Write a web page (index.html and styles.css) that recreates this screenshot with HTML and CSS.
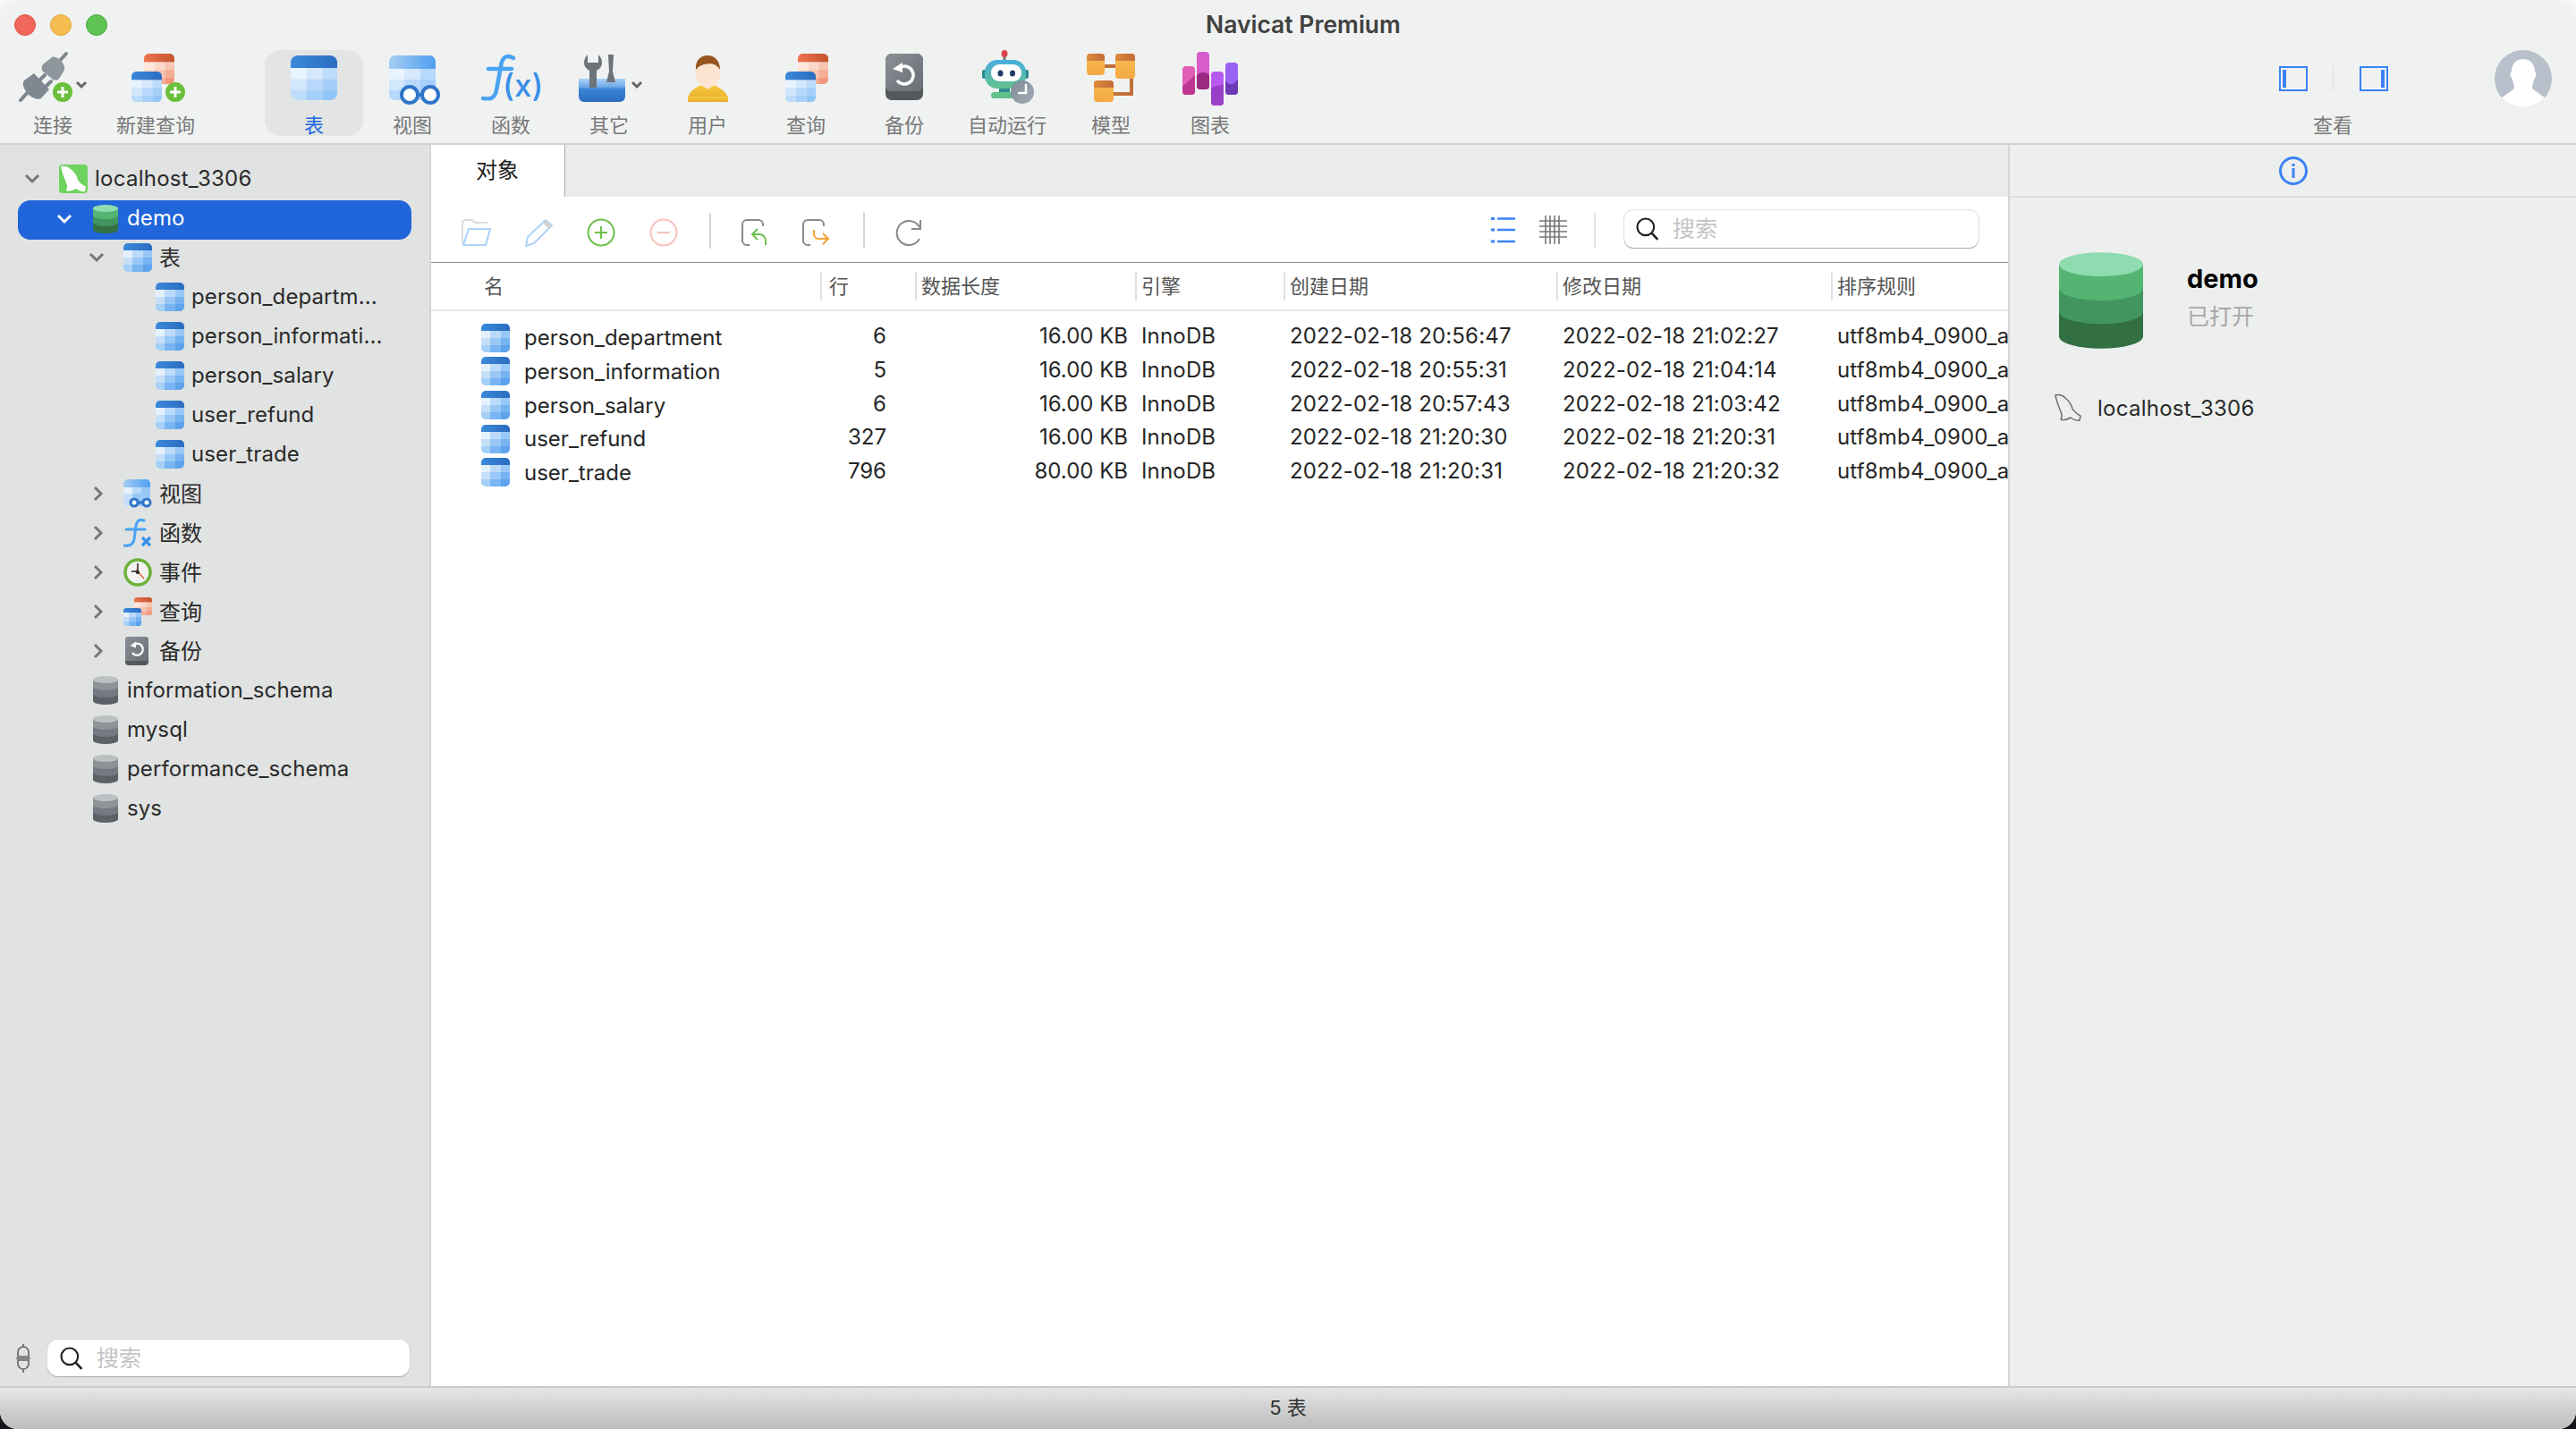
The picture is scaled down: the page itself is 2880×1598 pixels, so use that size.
FILE: index.html
```html
<!DOCTYPE html>
<html lang="zh">
<head>
<meta charset="utf-8">
<title>Navicat Premium</title>
<link rel="stylesheet" href="styles.css">
</head>
<body>
<svg class="defs" aria-hidden="true">
  <defs>
    <clipPath id="rc"><rect width="32" height="32" rx="5"/></clipPath>
    <linearGradient id="gh" x1="0" x2="1" y1="0" y2="0"><stop offset="0" stop-color="#3b89da"/><stop offset="1" stop-color="#2a6cc0"/></linearGradient>
    <linearGradient id="go" x1="0" x2="1" y1="0" y2="0"><stop offset="0" stop-color="#ea744f"/><stop offset="1" stop-color="#c5532c"/></linearGradient>
    <linearGradient id="gv" x1="0" x2="1" y1="0" y2="0"><stop offset="0" stop-color="#a5cdf3"/><stop offset="1" stop-color="#4d9ef0"/></linearGradient>
    <linearGradient id="gb" x1="0" x2="0" y1="0" y2="1"><stop offset="0" stop-color="#a9d3f8"/><stop offset=".35" stop-color="#6fa9e6"/><stop offset=".45" stop-color="#3c83d6"/><stop offset="1" stop-color="#2a6cc0"/></linearGradient>
    <linearGradient id="gu" x1="0" x2="0" y1="0" y2="1"><stop offset="0" stop-color="#f6cb3e"/><stop offset="1" stop-color="#e8a92c"/></linearGradient>
    <linearGradient id="gk" x1="0" x2="1" y1="0" y2="1"><stop offset="0" stop-color="#8b9096"/><stop offset="1" stop-color="#696e75"/></linearGradient>
    <linearGradient id="gr" x1="0" x2="0" y1="0" y2="1"><stop offset="0" stop-color="#48aede"/><stop offset="1" stop-color="#62c08c"/></linearGradient>
    <linearGradient id="gc" x1="0" x2="1" y1="0" y2="1"><stop offset="0" stop-color="#7d8a96"/><stop offset="1" stop-color="#a3adb5"/></linearGradient>
    <linearGradient id="gm" x1="0" x2="0" y1="0" y2="1"><stop offset="0" stop-color="#f8bb52"/><stop offset="1" stop-color="#f4a843"/></linearGradient>
    <linearGradient id="gmh" x1="0" x2="1" y1="0" y2="0"><stop offset="0" stop-color="#e08a3c"/><stop offset="1" stop-color="#bf6a38"/></linearGradient>
    <symbol id="tbl" viewBox="0 0 32 32" preserveAspectRatio="none">
      <g clip-path="url(#rc)">
        <rect width="32" height="8" fill="url(#gh)"/>
        <rect y="8" width="10" height="8" fill="#e4f1fd"/><rect x="10" y="8" width="12" height="8" fill="#bcdafa"/><rect x="22" y="8" width="10" height="8" fill="#97c8f7"/>
        <rect y="16" width="10" height="8" fill="#c5dff9"/><rect x="10" y="16" width="12" height="8" fill="#99c8f7"/><rect x="22" y="16" width="10" height="8" fill="#75b3f1"/>
        <rect y="24" width="10" height="8" fill="#a5d0f8"/><rect x="10" y="24" width="12" height="8" fill="#78b5f2"/><rect x="22" y="24" width="10" height="8" fill="#5ea3eb"/>
      </g>
    </symbol>
    <symbol id="tbl-lt" viewBox="0 0 32 32" preserveAspectRatio="none">
      <g clip-path="url(#rc)">
        <rect width="32" height="9" fill="url(#gh)"/>
        <rect y="9" width="11" height="8" fill="#e7f3fe"/><rect x="11" y="9" width="11" height="8" fill="#d5e8fd"/><rect x="22" y="9" width="10" height="8" fill="#bcdcfb"/>
        <rect y="17" width="11" height="8" fill="#d2e6fc"/><rect x="11" y="17" width="11" height="8" fill="#b8d9fb"/><rect x="22" y="17" width="10" height="8" fill="#a5cffa"/>
        <rect y="25" width="11" height="7" fill="#bcdcfb"/><rect x="11" y="25" width="11" height="7" fill="#a6d0fa"/><rect x="22" y="25" width="10" height="7" fill="#91c6f9"/>
      </g>
    </symbol>
    <symbol id="tbl-or" viewBox="0 0 32 32" preserveAspectRatio="none">
      <g clip-path="url(#rc)">
        <rect width="32" height="9" fill="url(#go)"/>
        <rect y="9" width="11" height="8" fill="#fde6dc"/><rect x="11" y="9" width="11" height="8" fill="#fcd8ca"/><rect x="22" y="9" width="10" height="8" fill="#f9c4b0"/>
        <rect y="17" width="11" height="8" fill="#fcd8ca"/><rect x="11" y="17" width="11" height="8" fill="#f9c4b0"/><rect x="22" y="17" width="10" height="8" fill="#f6ad94"/>
        <rect y="25" width="11" height="7" fill="#f9c4b0"/><rect x="11" y="25" width="11" height="7" fill="#f6ad94"/><rect x="22" y="25" width="10" height="7" fill="#f3977a"/>
      </g>
    </symbol>
    <symbol id="db-g" viewBox="0 0 28 32">
      <path d="M0 4V28A14 4 0 0 0 28 28V4Z" fill="#327043"/>
      <path d="M0 4V19.8A14 4 0 0 0 28 19.8V4Z" fill="#43955f"/>
      <path d="M0 4V12A14 4 0 0 0 28 12V4Z" fill="#54b573"/>
      <ellipse cx="14" cy="4" rx="14" ry="4" fill="#8edcb0"/>
    </symbol>
    <symbol id="db-k" viewBox="0 0 28 32">
      <path d="M0 4V28A14 4 0 0 0 28 28V4Z" fill="#5c6167"/>
      <path d="M0 4V19.8A14 4 0 0 0 28 19.8V4Z" fill="#747a81"/>
      <path d="M0 4V12A14 4 0 0 0 28 12V4Z" fill="#8e9398"/>
      <ellipse cx="14" cy="4" rx="14" ry="4" fill="#bcc0c3"/>
    </symbol>
    <symbol id="search" viewBox="0 0 24 24">
      <circle cx="10" cy="10" r="8.6" fill="none" stroke="#222" stroke-width="2"/>
      <path d="M16.2 16.2L22.5 23" stroke="#222" stroke-width="2.4" fill="none"/>
    </symbol>
    <symbol id="dolphin" viewBox="0 0 32 32">
      <path d="M2 2C6 1 10 2 13 5C18 9 20 13 21 17C23 21 27 23 30 25L29 30C26 31 22 29 19 27C14 30 9 30 8 29C10 26 9 22 7 18C5 13 3 8 2 2Z"/>
    </symbol>
    <symbol id="chev-d" viewBox="0 0 20 20"><path d="M3 6L10 13L17 6" fill="none" stroke-width="3"/></symbol>
    <symbol id="chev-r" viewBox="0 0 20 20"><path d="M8 3L15 10L8 17" fill="none" stroke-width="3"/></symbol>
  </defs>
</svg>

<div class="window">
  <header class="head">
    <div class="titlebar">
      <div class="lights"><span class="light red"></span><span class="light yellow"></span><span class="light green"></span></div>
      <div class="title">Navicat Premium</div>
    </div>
    <div class="toolbar">
      <div class="tool t-first">
        <svg class="tool-ico" viewBox="4 56 110 64">
          <g stroke="#7d868e" stroke-width="4" stroke-linecap="round" fill="none"><path d="M63 72L74 60"/><path d="M23 112L33 101"/><path d="M44 90L50 84"/><path d="M51 97L57 91"/></g>
          <path d="M48 72L58 64C62 62 70 68 72 74C73 78 70 82 66 88C64 90 60 90 58 88L48 80C46 78 46 74 48 72Z" fill="#8e969d"/>
          <path d="M27 90L38 82L55 100L46 110C43 112 36 110 31 105C27 100 24 94 27 90Z" fill="#7f8890"/>
          <circle cx="70" cy="103" r="11" fill="#6abf3b"/><path d="M70 97V109M64 103H76" stroke="#fff" stroke-width="3"/>
          <path d="M86 92L91 97L96 92" fill="none" stroke="#666" stroke-width="3"/>
        </svg>
        <span class="tool-label">连接</span>
      </div>
      <div class="tool t-new">
        <svg class="tool-ico" viewBox="119 56 110 64">
          <use href="#tbl-or" x="161" y="60" width="34" height="34"/>
          <use href="#tbl-lt" x="147" y="80" width="34" height="34"/>
          <circle cx="196" cy="103" r="11" fill="#6abf3b"/><path d="M196 97V109M190 103H202" stroke="#fff" stroke-width="3"/>
        </svg>
        <span class="tool-label">新建查询</span>
      </div>
      <div class="tool t-table is-active">
        <svg class="tool-ico" viewBox="296 56 110 64"><use href="#tbl-lt" x="325" y="62" width="52" height="50"/></svg>
        <span class="tool-label">表</span>
      </div>
      <div class="tool">
        <svg class="tool-ico" viewBox="406 56 110 64">
          <clipPath id="cv"><rect x="435" y="62" width="52" height="50" rx="7"/></clipPath>
          <g clip-path="url(#cv)">
            <rect x="435" y="62" width="52" height="15" fill="url(#gv)"/>
            <rect x="435" y="77" width="17" height="12" fill="#e7f3fe"/><rect x="452" y="77" width="18" height="12" fill="#d5e8fd"/><rect x="470" y="77" width="17" height="12" fill="#b5d8fb"/>
            <rect x="435" y="89" width="17" height="12" fill="#d2e6fc"/><rect x="452" y="89" width="18" height="12" fill="#b8d9fb"/><rect x="470" y="89" width="17" height="12" fill="#a5cffa"/>
            <rect x="435" y="101" width="52" height="11" fill="#b5d8fb"/>
          </g>
          <path d="M466 106H474" stroke="#2f75c8" stroke-width="4"/>
          <circle cx="458" cy="106" r="9" fill="#fff" stroke="#2f75c8" stroke-width="4"/>
          <circle cx="481" cy="106" r="9" fill="#fff" stroke="#2f75c8" stroke-width="4"/>
        </svg>
        <span class="tool-label">视图</span>
      </div>
      <div class="tool">
        <svg class="tool-ico" viewBox="516 56 110 64">
          <path d="M574 65C566 60 561 65 560 74L555 101C553 111 547 111 540 110" fill="none" stroke="#4aa3f2" stroke-width="4.500" stroke-linecap="round"/>
          <path d="M546 77H572" stroke="#4aa3f2" stroke-width="4.500" stroke-linecap="round"/>
          <text class="icon-text" x="562" y="108" font-size="35" fill="#3a8fe8">(x)</text>
        </svg>
        <span class="tool-label">函数</span>
      </div>
      <div class="tool">
        <svg class="tool-ico" viewBox="626 56 110 64">
          <path d="M647 88H699V108A6 6 0 0 1 693 114H653A6 6 0 0 1 647 108Z" fill="url(#gb)"/>
          <path d="M659 98V79C655 77 653 74 653 70C653 66 655 63 657 61V70H669V61C671 63 673 66 673 70C673 74 671 77 667 79V98Z" fill="#6d7379"/>
          <path d="M680 61H686L685 80L688 92H678L681 80Z" fill="#6d7379"/>
          <path d="M707 92L712 97L717 92" fill="none" stroke="#666" stroke-width="3"/>
        </svg>
        <span class="tool-label">其它</span>
      </div>
      <div class="tool">
        <svg class="tool-ico" viewBox="735 56 110 64">
          <path d="M768 114C768 104 772 100 783 95H797C808 100 813 104 813 114Z" fill="url(#gu)" />
          <path d="M768 111A3 3 0 0 0 771 114H810A3 3 0 0 0 813 111V108H768Z" fill="url(#gu)"/>
          <ellipse cx="790" cy="81" rx="14" ry="17" fill="#fde4d0"/>
          <path d="M784 92H796V96L790 100L784 96Z" fill="#fde4d0"/>
          <path d="M777 78C776 68 782 62 790 62C798 62 804 68 804 78C800 72 796 70 786 72C782 73 779 75 777 78Z" fill="#96561f"/>
        </svg>
        <span class="tool-label">用户</span>
      </div>
      <div class="tool">
        <svg class="tool-ico" viewBox="845 56 110 64">
          <use href="#tbl-or" x="891" y="60" width="34" height="34"/>
          <use href="#tbl-lt" x="877" y="80" width="34" height="34"/>
        </svg>
        <span class="tool-label">查询</span>
      </div>
      <div class="tool">
        <svg class="tool-ico" viewBox="956 56 110 64">
          <rect x="990" y="60" width="42" height="52" rx="7" fill="#55585c"/>
          <path d="M990 67A7 7 0 0 1 997 60H1025A7 7 0 0 1 1032 67V96A6 6 0 0 1 1026 102H996A6 6 0 0 1 990 96Z" fill="url(#gk)"/>
          <path d="M1008 74.500A10 10 0 1 1 1003 90" fill="none" stroke="#fff" stroke-width="3.600"/>
          <path d="M1009 70V81L998 77Z" fill="#fff"/>
        </svg>
        <span class="tool-label">备份</span>
      </div>
      <div class="tool t-wide">
        <svg class="tool-ico" viewBox="1066 56 120 64">
          <path d="M1123 62V68" stroke="#777" stroke-width="3"/><ellipse cx="1123" cy="60" rx="3.500" ry="4" fill="#d8424a"/>
          <rect x="1098" y="78" width="6" height="10" rx="2" fill="#2f8a90"/><rect x="1144" y="78" width="6" height="10" rx="2" fill="#2f8a90"/>
          <rect x="1117" y="96" width="12" height="10" fill="#2f8a90"/>
          <rect x="1108" y="103" width="26" height="7" rx="3.500" fill="#62c08c"/>
          <rect x="1101" y="67" width="46" height="32" rx="14" fill="url(#gr)"/>
          <rect x="1108" y="72" width="34" height="19" rx="9" fill="#fff"/>
          <ellipse cx="1118.500" cy="82" rx="3" ry="3.500" fill="#1f3a66"/><ellipse cx="1132" cy="82" rx="3" ry="3.500" fill="#1f3a66"/>
          <circle cx="1143" cy="103" r="13" fill="url(#gc)"/>
          <path d="M1147 94V104H1138" fill="none" stroke="#fff" stroke-width="2.500"/>
        </svg>
        <span class="tool-label">自动运行</span>
      </div>
      <div class="tool">
        <svg class="tool-ico" viewBox="1187 56 110 64">
          <path d="M1235 74H1247M1265 88V105H1245" fill="none" stroke="#c07038" stroke-width="4"/>
          <rect x="1215" y="60" width="20" height="24" rx="4" fill="url(#gm)"/><path d="M1215 64A4 4 0 0 1 1219 60H1231A4 4 0 0 1 1235 64V68H1215Z" fill="url(#gmh)"/>
          <rect x="1247" y="60" width="22" height="28" rx="4" fill="url(#gm)"/><path d="M1247 64A4 4 0 0 1 1251 60H1265A4 4 0 0 1 1269 64V68H1247Z" fill="url(#gmh)"/>
          <rect x="1223" y="90" width="22" height="24" rx="4" fill="url(#gm)"/><path d="M1223 94A4 4 0 0 1 1227 90H1241A4 4 0 0 1 1245 94V98H1223Z" fill="url(#gmh)"/>
        </svg>
        <span class="tool-label">模型</span>
      </div>
      <div class="tool">
        <svg class="tool-ico" viewBox="1298 56 110 64">
          <rect x="1322" y="74" width="14" height="32" rx="4" fill="#e25fb8"/><path d="M1322 97L1336 84V102A4 4 0 0 1 1332 106H1326A4 4 0 0 1 1322 102Z" fill="#c03592"/>
          <rect x="1338" y="58" width="14" height="42" rx="4" fill="#d85ccb"/><path d="M1338 84C1342 80 1348 80 1352 84V96A4 4 0 0 1 1348 100H1342A4 4 0 0 1 1338 96Z" fill="#9a2a80"/>
          <rect x="1354" y="80" width="14" height="38" rx="4" fill="#b85af2"/><path d="M1354 98L1368 94V114A4 4 0 0 1 1364 118H1358A4 4 0 0 1 1354 114Z" fill="#9a3fc8"/>
          <rect x="1370" y="70" width="14" height="36" rx="4" fill="#9a62f2"/><path d="M1370 90C1374 96 1380 96 1384 88V102A4 4 0 0 1 1380 106H1374A4 4 0 0 1 1370 102Z" fill="#6c3ab4"/>
        </svg>
        <span class="tool-label">图表</span>
      </div>
      <div class="tool t-view">
        <svg class="tool-ico" viewBox="2508 56 200 64">
          <rect x="2549" y="75" width="30" height="26" fill="none" stroke="#3b82f6" stroke-width="2"/>
          <rect x="2552" y="78" width="4" height="20" fill="#3b82f6"/>
          <path d="M2608.500 74V102" stroke="#e2e4e3" stroke-width="1.500"/>
          <rect x="2639" y="75" width="30" height="26" fill="none" stroke="#3b82f6" stroke-width="2"/>
          <rect x="2662" y="78" width="4" height="20" fill="#3b82f6"/>
        </svg>
        <span class="tool-label">查看</span>
      </div>
      <svg class="avatar" viewBox="2781 56 80 64">
        <clipPath id="ca"><ellipse cx="2821" cy="88" rx="32" ry="32"/></clipPath>
        <ellipse cx="2821" cy="88" rx="32" ry="32" fill="#b8c0cc"/>
        <g clip-path="url(#ca)" fill="#fff">
          <path d="M2821 66C2829 66 2834 72 2834 80C2836 82 2836 85 2834 87C2832 92 2831 95 2831 99L2846 110L2846 122H2796L2796 110L2811 99C2811 95 2810 92 2808 87C2806 85 2806 82 2808 80C2808 72 2813 66 2821 66Z"/>
        </g>
      </svg>
    </div>
  </header>

  <div class="body">
    <aside class="sidebar">
      <div class="tree">
        <div class="row d0"><svg class="chev"><use href="#chev-d"/></svg>
          <svg class="ico32" viewBox="0 0 32 32"><rect width="32" height="32" rx="4" fill="#6fd35f"/><use href="#dolphin" class="dolphin-w" width="32" height="32"/></svg><span>localhost_3306</span></div>
        <div class="row d1 is-selected"><svg class="chev"><use href="#chev-d"/></svg><svg class="ico-db"><use href="#db-g"/></svg><span>demo</span></div>
        <div class="row d2"><svg class="chev"><use href="#chev-d"/></svg><svg class="ico32"><use href="#tbl"/></svg><span class="cjk">表</span></div>
        <div class="row d3"><svg class="ico32"><use href="#tbl"/></svg><span>person_departm...</span></div>
        <div class="row d3"><svg class="ico32"><use href="#tbl"/></svg><span>person_informati...</span></div>
        <div class="row d3"><svg class="ico32"><use href="#tbl"/></svg><span>person_salary</span></div>
        <div class="row d3"><svg class="ico32"><use href="#tbl"/></svg><span>user_refund</span></div>
        <div class="row d3"><svg class="ico32"><use href="#tbl"/></svg><span>user_trade</span></div>
        <div class="row d2"><svg class="chev"><use href="#chev-r"/></svg>
          <svg class="ico32" viewBox="0 0 32 32">
            <clipPath id="cv2"><rect width="30" height="30" rx="5"/></clipPath>
            <g clip-path="url(#cv2)"><rect width="30" height="9" fill="url(#gv)"/><rect y="9" width="10" height="7" fill="#e4f1fd"/><rect x="10" y="9" width="10" height="7" fill="#bcdafa"/><rect x="20" y="9" width="10" height="7" fill="#97c8f7"/><rect y="16" width="10" height="14" fill="#c5dff9"/><rect x="10" y="16" width="20" height="14" fill="#99c8f7"/></g>
            <path d="M12 26H21" stroke="#2f75c8" stroke-width="3"/>
            <circle cx="12" cy="26" r="4" fill="#fff" stroke="#2f75c8" stroke-width="3"/><circle cx="26" cy="26" r="4" fill="#fff" stroke="#2f75c8" stroke-width="3"/>
          </svg><span class="cjk">视图</span></div>
        <div class="row d2"><svg class="chev"><use href="#chev-r"/></svg>
          <svg class="ico32" viewBox="0 0 32 32">
            <path d="M23 2C17 0 15 3 14 8L12 23C11 29 7 31 1 30" fill="none" stroke="#4aa3f2" stroke-width="3" stroke-linecap="round"/>
            <path d="M3 12H24" stroke="#4aa3f2" stroke-width="3" stroke-linecap="round"/>
            <path d="M21 21L30 30M30 21L21 30" stroke="#3a8fe8" stroke-width="3.200"/>
          </svg><span class="cjk">函数</span></div>
        <div class="row d2"><svg class="chev"><use href="#chev-r"/></svg>
          <svg class="ico32" viewBox="0 0 32 32">
            <circle cx="16" cy="16" r="14" fill="#f2f2f0" stroke="#6bb23a" stroke-width="3.500"/>
            <path d="M16 6V16M9 15H16" stroke="#222" stroke-width="1.500"/><path d="M14 13L23 23" stroke="#e0562c" stroke-width="1.200"/><circle cx="16" cy="16" r="2" fill="#222"/>
          </svg><span class="cjk">事件</span></div>
        <div class="row d2"><svg class="chev"><use href="#chev-r"/></svg>
          <svg class="ico32" viewBox="0 0 32 32"><use href="#tbl-or" x="12" y="0" width="20" height="20"/><use href="#tbl" x="0" y="12" width="20" height="20"/></svg><span class="cjk">查询</span></div>
        <div class="row d2"><svg class="chev"><use href="#chev-r"/></svg>
          <svg class="ico32" viewBox="0 0 32 32">
            <rect x="2" width="26" height="32" rx="4" fill="#55585c"/>
            <path d="M2 4A4 4 0 0 1 6 0H24A4 4 0 0 1 28 4V27H2Z" fill="url(#gk)"/>
            <path d="M13 8A6.500 6.500 0 1 1 10 18" fill="none" stroke="#fff" stroke-width="2.400"/><path d="M14 5.500V12.500L7.500 10Z" fill="#fff"/>
          </svg><span class="cjk">备份</span></div>
        <div class="row d1b"><svg class="ico-db"><use href="#db-k"/></svg><span>information_schema</span></div>
        <div class="row d1b"><svg class="ico-db"><use href="#db-k"/></svg><span>mysql</span></div>
        <div class="row d1b"><svg class="ico-db"><use href="#db-k"/></svg><span>performance_schema</span></div>
        <div class="row d1b"><svg class="ico-db"><use href="#db-k"/></svg><span>sys</span></div>
      </div>
      <div class="side-foot">
        <svg class="plug" viewBox="0 0 16 32"><path d="M8 0V4M2 14V9A6 6 0 0 1 14 9V14ZM2 18H14V22A6 6 0 0 1 2 22ZM0 16H16M8 28V32" fill="none" stroke="#666" stroke-width="1.700"/></svg>
        <div class="side-search"><svg class="mag"><use href="#search"/></svg><span class="placeholder">搜索</span></div>
      </div>
    </aside>

    <main class="main">
      <div class="tabs"><div class="tab">对象</div></div>
      <div class="obj-bar">
        <svg class="btn" viewBox="514 240 36 36"><path d="M517 272V250Q517 246 521 246H528L531 249H545" fill="none" stroke="#dcdcdc" stroke-width="2"/><path d="M524 256H548L543 274H518Z" fill="none" stroke="#aed3f9" stroke-width="2.200" stroke-linejoin="round"/></svg>
        <svg class="btn" viewBox="583 240 36 36"><path d="M587 275L589 265L609 246L616 252L596 272Z" fill="none" stroke="#aed3f9" stroke-width="2" stroke-linejoin="round"/><path d="M608 248L614 254" stroke="#d4d4d4" stroke-width="5"/></svg>
        <svg class="btn" viewBox="654 240 36 36"><circle cx="672" cy="260" r="14.500" fill="none" stroke="#6cc04a" stroke-width="2"/><path d="M672 253V267M665 260H679" stroke="#6cc04a" stroke-width="2"/></svg>
        <svg class="btn btn-last" viewBox="724 240 36 36"><circle cx="742" cy="260" r="14.500" fill="none" stroke="#f6c2bb" stroke-width="2"/><path d="M735 260H749" stroke="#f6c2bb" stroke-width="2"/></svg>
        <span class="vsep vs1"></span>
        <svg class="btn" viewBox="825 240 36 36"><path d="M853 253V251A5 5 0 0 0 848 246H835A5 5 0 0 0 830 251V269A5 5 0 0 0 835 274H838" fill="none" stroke="#8a8a8a" stroke-width="2"/><path d="M856 274V269A7 7 0 0 0 849 262H841M847 256L841 262L847 268" fill="none" stroke="#6cc04a" stroke-width="2"/></svg>
        <svg class="btn" viewBox="895 240 36 36"><path d="M921 253V251A5 5 0 0 0 916 246H903A5 5 0 0 0 898 251V269A5 5 0 0 0 903 274H906" fill="none" stroke="#8a8a8a" stroke-width="2"/><path d="M910 257V262A5 5 0 0 0 915 267H925M920 261L926 267L920 273" fill="none" stroke="#f4a236" stroke-width="2"/></svg>
        <span class="vsep vs2"></span>
        <svg class="btn" viewBox="997 240 36 36"><path d="M1028 254A13.500 13.500 0 1 0 1028 267" fill="none" stroke="#8a8a8a" stroke-width="2"/><path d="M1029 246V256H1019" fill="none" stroke="#8a8a8a" stroke-width="2"/></svg>
        <svg class="list-ico" viewBox="1667 242 27 34"><path d="M1667 245.500H1671M1667 258H1671M1667 271H1671" stroke="#3b82f6" stroke-width="3"/><path d="M1674 245.500H1694M1674 258H1694M1674 271H1694" stroke="#3b82f6" stroke-width="2.400"/></svg>
        <svg class="grid-ico" viewBox="1721 242 31 34"><path d="M1728 242V274M1733 242V274M1738 242V274M1743 242V274M1721 248H1752M1721 254H1752M1721 260H1752M1721 266H1752" stroke="#777" stroke-width="1.600"/></svg>
        <span class="vsep vs3"></span>
        <div class="obj-search"><svg class="mag"><use href="#search"/></svg><span class="placeholder">搜索</span></div>
      </div>
      <div class="grid thead">
        <div class="th th-name">名</div><div class="th th-rows">行</div><div class="th">数据长度</div><div class="th">引擎</div><div class="th">创建日期</div><div class="th">修改日期</div><div class="th">排序规则</div>
      </div>
      <div class="tbody">
        <div class="grid tr"><div class="td-name"><svg class="ico32"><use href="#tbl"/></svg><span>person_department</span></div><div class="td num">6</div><div class="td num">16.00 KB</div><div class="td">InnoDB</div><div class="td">2022-02-18 20:56:47</div><div class="td">2022-02-18 21:02:27</div><div class="td">utf8mb4_0900_ai_ci</div></div>
        <div class="grid tr"><div class="td-name"><svg class="ico32"><use href="#tbl"/></svg><span>person_information</span></div><div class="td num">5</div><div class="td num">16.00 KB</div><div class="td">InnoDB</div><div class="td">2022-02-18 20:55:31</div><div class="td">2022-02-18 21:04:14</div><div class="td">utf8mb4_0900_ai_ci</div></div>
        <div class="grid tr"><div class="td-name"><svg class="ico32"><use href="#tbl"/></svg><span>person_salary</span></div><div class="td num">6</div><div class="td num">16.00 KB</div><div class="td">InnoDB</div><div class="td">2022-02-18 20:57:43</div><div class="td">2022-02-18 21:03:42</div><div class="td">utf8mb4_0900_ai_ci</div></div>
        <div class="grid tr"><div class="td-name"><svg class="ico32"><use href="#tbl"/></svg><span>user_refund</span></div><div class="td num">327</div><div class="td num">16.00 KB</div><div class="td">InnoDB</div><div class="td">2022-02-18 21:20:30</div><div class="td">2022-02-18 21:20:31</div><div class="td">utf8mb4_0900_ai_ci</div></div>
        <div class="grid tr"><div class="td-name"><svg class="ico32"><use href="#tbl"/></svg><span>user_trade</span></div><div class="td num">796</div><div class="td num">80.00 KB</div><div class="td">InnoDB</div><div class="td">2022-02-18 21:20:31</div><div class="td">2022-02-18 21:20:32</div><div class="td">utf8mb4_0900_ai_ci</div></div>
      </div>
    </main>

    <aside class="inspector">
      <div class="insp-head">
        <svg class="info" viewBox="0 0 32 32"><circle cx="16" cy="16" r="14.500" fill="none" stroke="#3b82f6" stroke-width="3"/><rect x="14.500" y="13" width="3" height="11" fill="#3b82f6"/><rect x="14.500" y="8" width="3" height="3" fill="#3b82f6"/></svg>
      </div>
      <div class="insp-body">
        <div class="insp-db">
          <svg class="big-db"><use href="#db-g"/></svg>
          <div class="insp-text"><div class="insp-name">demo</div><div class="insp-state">已打开</div></div>
        </div>
        <div class="insp-conn">
          <svg class="ico32" viewBox="0 0 32 32"><use href="#dolphin" class="dolphin-o" width="32" height="32"/></svg><span>localhost_3306</span>
        </div>
      </div>
    </aside>
  </div>

  <footer class="status">5 表</footer>
</div>
</body>
</html>
```

FILE: styles.css
```css
* { box-sizing: border-box; }
html, body { margin: 0; height: 100%; }
body {
  background: linear-gradient(180deg, #f6f6f6 0 50%, #15151c 50% 100%);
  font-family: Inter, "Noto Sans CJK SC", sans-serif;
  font-size: 24px;
  color: #2a2a2a;
  overflow: hidden;
}
.defs { position: absolute; width: 0; height: 0; }
.window {
  width: 2880px; height: 1598px;
  display: flex; flex-direction: column;
  border-radius: 20px; overflow: hidden;
  background: #f0f2f1;
}

/* header */
.head { height: 162px; flex: none; background: #f0f2f1; border-bottom: 2px solid #cfd0d0; }
.titlebar { height: 56px; display: grid; grid-template-columns: 1fr auto 1fr; align-items: center; }
.lights { display: flex; gap: 16px; padding-left: 16px; }
.light { width: 24px; height: 24px; border-radius: 50%; }
.red { background: #f1675e; border: 1px solid #dd5248; }
.yellow { background: #f8bd50; border: 1px solid #e0a23a; }
.green { background: #5fc453; border: 1px solid #4aa93f; }
.title { padding: 0 0 2px 34px; font-family: Inter, sans-serif; font-weight: 600; font-size: 26.500px; color: #414141; line-height: 1; }
.toolbar { display: flex; height: 104px; padding-left: 4px; padding-right: 19px; }
.tool { width: 110px; height: 96px; flex: none; display: flex; flex-direction: column; align-items: center; border-radius: 18px; }
.tool-ico { width: 110px; height: 64px; flex: none; display: block; }
.tool-label { font-family: "Noto Sans CJK SC", sans-serif; font-size: 22px; line-height: 24px; margin-top: 6px; color: #787878; white-space: nowrap; }
.icon-text { font-family: Inter, sans-serif; font-weight: 500; }
.t-new { margin-left: 5px; }
.t-table { margin-left: 67px; }
.t-wide { width: 120px; }
.t-wide .tool-ico { width: 120px; }
.t-wide + .tool { margin-left: 1px; }
.t-wide + .tool + .tool { margin-left: 1px; }
.t-view { width: 200px; margin-left: auto; margin-right: 73px; }
.t-view .tool-ico { width: 200px; }
.is-active { background: #e3e5e4; }
.is-active .tool-label { color: #2068e0; }
.avatar { width: 80px; height: 64px; flex: none; }

/* body */
.body { flex: 1; display: flex; min-height: 0; }
.sidebar { width: 482px; flex: none; background: #e1e3e2; border-right: 2px solid #d5d7d6; display: flex; flex-direction: column; }
.tree { flex: 1; padding-top: 16px; }
.row { height: 44px; margin: 0 20px; display: flex; align-items: center; font-size: 24px; letter-spacing: .1px; color: #2a2a2a; white-space: nowrap; border-radius: 14px; }
.row > span { margin-left: 8px; padding-bottom: 2px; }
.row > .cjk { font-family: "Noto Sans CJK SC", sans-serif; font-size: 24px; letter-spacing: 0; padding-bottom: 3px; }
.chev { width: 20px; height: 20px; margin-right: 20px; flex: none; stroke: #777; }
.ico32 { width: 32px; height: 32px; flex: none; display: block; }
.ico-db { width: 28px; height: 32px; flex: none; margin-left: 2px; }
.row > .ico-db + span { margin-left: 10px; }
.d0 { padding-left: 6px; letter-spacing: .25px; }
.d1 { padding-left: 42px; }
.d1b { padding-left: 82px; }
.d2 { padding-left: 78px; }
.d3 { padding-left: 154px; }
.is-selected { background: #2065d9; color: #fff; margin-top: 2px; margin-bottom: -2px; padding-bottom: 2px; }
.is-selected > span { padding-bottom: 4px; }
.is-selected .chev { stroke: #fff; }
.dolphin-w { fill: #fff; }
.dolphin-o { fill: none; stroke: #6a6a6a; stroke-width: 1.500px; }
.side-foot { display: flex; align-items: center; gap: 19px; padding: 0 22px 11px 18px; }
.plug { width: 16px; height: 32px; flex: none; }
.side-search { flex: 1; height: 41px; display: flex; align-items: center; gap: 15px; padding-left: 14px; background: #fff; border-radius: 12px; box-shadow: 0 1px 1px #a9a9a9, 0 0 0 1px #dcdcdc; }
.mag { width: 26px; height: 26px; flex: none; }
.placeholder { font-family: "Noto Sans CJK SC", sans-serif; font-size: 25px; color: #c4c4c4; line-height: 1; padding-bottom: 2px; }

/* main */
.main { flex: 1; min-width: 0; background: #fff; overflow: hidden; display: flex; flex-direction: column; }
.tabs { height: 58px; flex: none; background: #ebebeb; display: flex; }
.tab { width: 150px; background: #fff; border-right: 1px solid #a8a8a8; padding-left: 50px; font-family: "Noto Sans CJK SC", sans-serif; font-size: 24px; line-height: 54px; color: #222; }
.obj-bar { height: 74px; flex: none; display: flex; align-items: center; padding: 3px 33px 0 32px; border-bottom: 1px solid #8c8c8c; }
.btn { width: 36px; height: 36px; flex: none; margin-right: 34px; }
.btn-last { margin-right: 0; }
.vsep { width: 2px; height: 40px; flex: none; background: #d4d4d4; }
.vs1 { margin-left: 33px; margin-right: 30px; }
.vs2 { margin-left: 0; margin-right: 30px; }
.list-ico { width: 27px; height: 34px; flex: none; margin-left: auto; margin-right: 27px; }
.grid-ico { width: 31px; height: 34px; flex: none; margin-right: 30px; }
.vs3 { margin-right: 32px; background: #e2e2e2; }
.obj-search { width: 396px; height: 42px; flex: none; margin-top: -4px; display: flex; align-items: center; gap: 15px; padding-left: 13px; background: #fff; border-radius: 10px; box-shadow: 0 1px 1px #aaa, 0 0 0 1px #e4e4e4; }
.obj-search .placeholder { padding-bottom: 4px; }
.grid { display: grid; grid-template-columns: 435px 106px 246px 166px 305px 307px 198px; }
.thead { height: 54px; flex: none; align-items: center; border-bottom: 2px solid #e6e6e6; }
.th { height: 32px; border-left: 2px solid #e0e0e0; padding-left: 5px; font-family: "Noto Sans CJK SC", sans-serif; font-size: 22px; line-height: 29px; color: #555; white-space: nowrap; }
.th-name { border-left: 0; padding-left: 59px; }
.th-rows { padding-left: 8px; }
.tbody { padding-top: 11px; }
.tr { height: 37.67px; align-items: center; font-size: 24px; color: #262626; }
.td-name { display: flex; align-items: center; gap: 16px; padding-left: 56px; }
.td { padding: 0 0 4px 7px; white-space: nowrap; overflow: hidden; letter-spacing: .17px; }
.num { text-align: right; padding-left: 0; padding-right: 8px; letter-spacing: 0; }
.tr .num:nth-child(2) { padding-right: 32px; }

/* inspector */
.inspector { width: 635px; flex: none; background: #edefee; border-left: 2px solid #d4d6d5; display: flex; flex-direction: column; }
.insp-head { height: 59px; flex: none; display: flex; align-items: center; justify-content: center; border-bottom: 2px solid #dcdddd; }
.info { width: 32px; height: 32px; }
.insp-body { padding: 61px 0 0 55px; }
.insp-db { display: flex; }
.big-db { width: 94px; height: 108px; flex: none; }
.insp-text { margin-left: 49px; padding-top: 10px; }
.insp-name { font-weight: 700; font-size: 29px; line-height: 40px; color: #000; }
.insp-state { font-family: "Noto Sans CJK SC", sans-serif; font-size: 25px; line-height: 38px; margin-top: 1px; color: #a8a8a8; }
.insp-conn { display: flex; align-items: center; gap: 17px; margin: 50px 0 0 -6px; font-size: 24px; letter-spacing: .25px; color: #2a2a2a; }

/* status */
.status { height: 48px; flex: none; border-top: 2px solid #cbcbcb; background: linear-gradient(180deg, #e6e6e6, #bcbcbc); text-align: center; font-family: Inter, "Noto Sans CJK SC", sans-serif; font-size: 22px; line-height: 44px; color: #333; }
```
